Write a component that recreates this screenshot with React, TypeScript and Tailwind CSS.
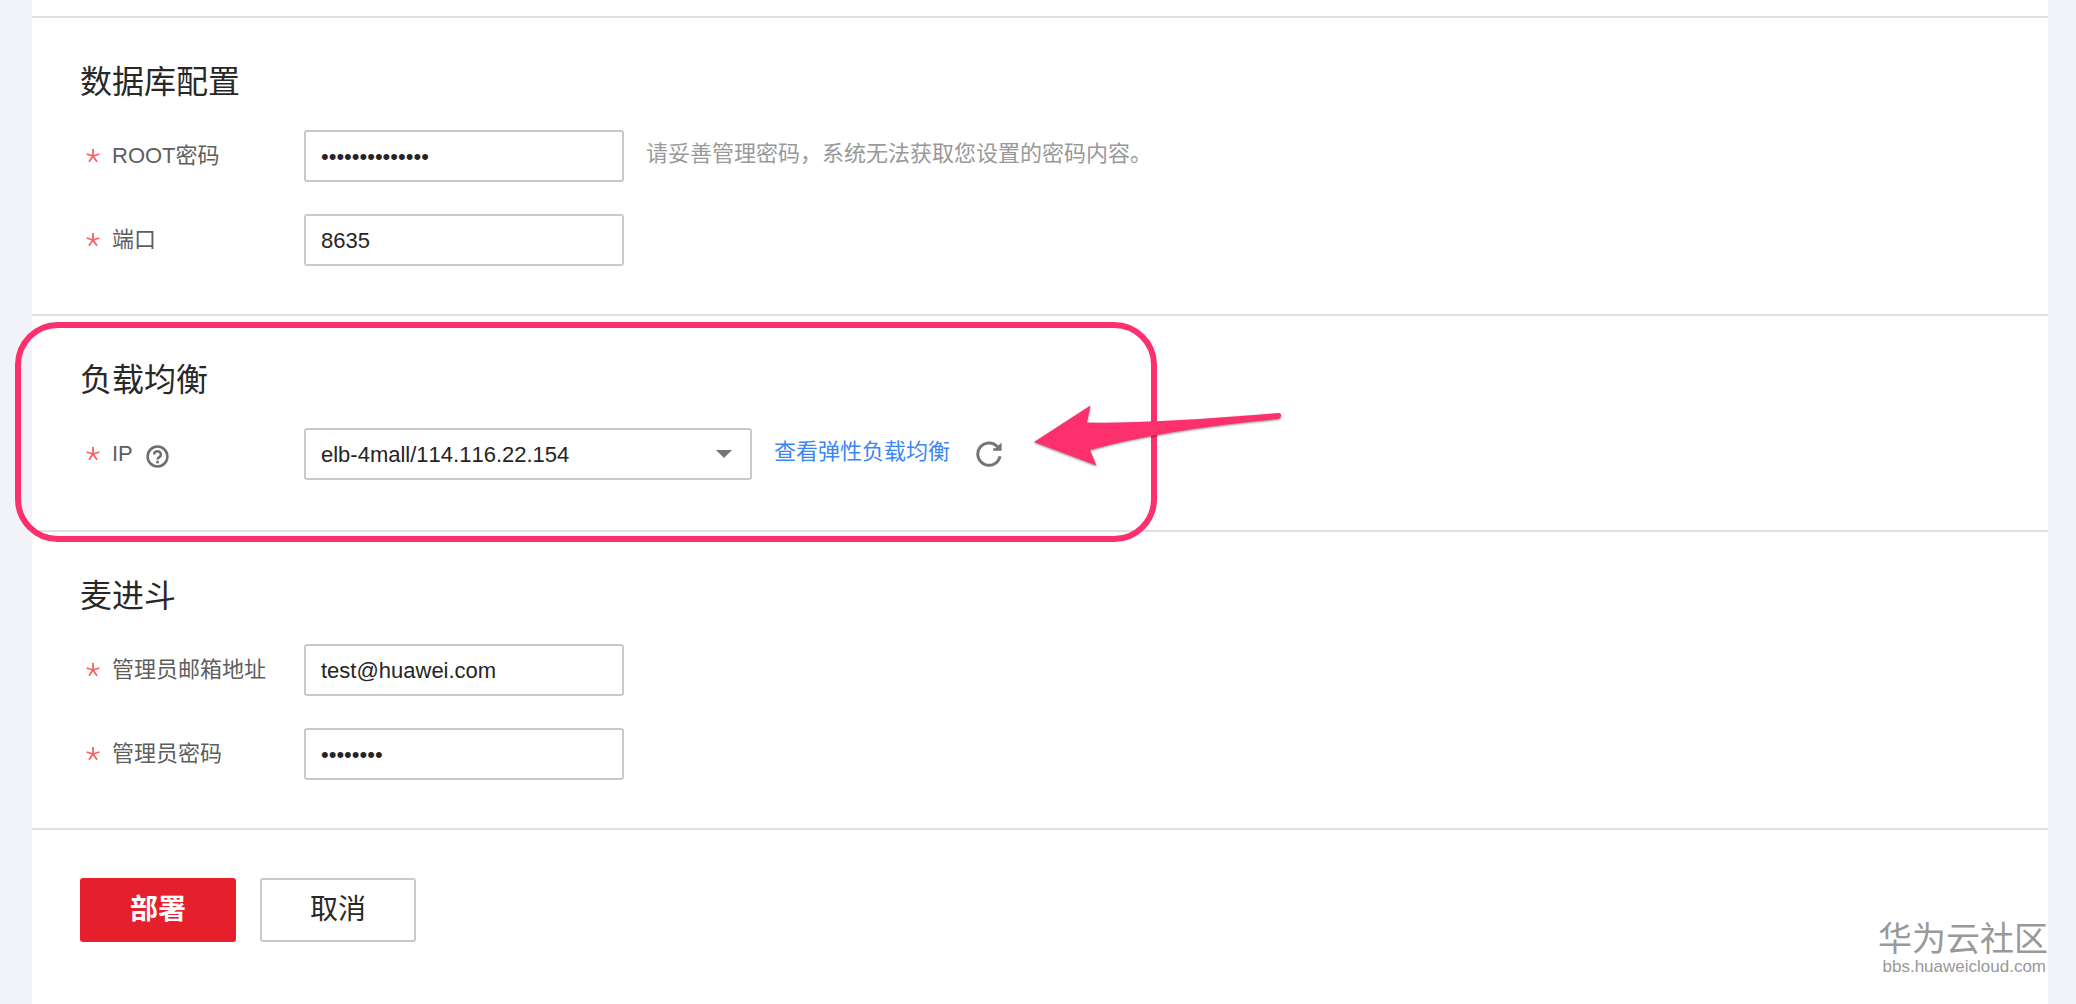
import type { ReactNode } from "react";

const inputClass =
  "h-[52px] w-80 rounded-[3px] border-2 border-[#c9c9c9] bg-white px-[15px] pt-[2px] text-[22px] text-[#252525] outline-none";

function Section({ title, children }: { title: string; children: ReactNode }) {
  return (
    <section className="border-t-2 border-[#dfdfdf] px-12 pb-12 pt-10">
      <h2 className="mb-6 text-[32px] leading-[48px] text-[#282828]">{title}</h2>
      <div className="flex flex-col gap-8">{children}</div>
    </section>
  );
}

function Field({
  id,
  label,
  help,
  children,
}: {
  id: string;
  label: string;
  help?: ReactNode;
  children: ReactNode;
}) {
  return (
    <div className="flex items-center">
      <div className="flex w-56 shrink-0 items-center pl-[6px] text-[22px] leading-8 text-[#5e5e5e]">
        <Asterisk />
        <label htmlFor={id}>{label}</label>
        {help}
      </div>
      {children}
    </div>
  );
}

function Asterisk() {
  return (
    <svg className="mr-3 h-[14px] w-[14px]" viewBox="0 0 14 14" fill="none" stroke="#f9605f" strokeWidth="1.8" aria-hidden="true">
      <path d="M7 0V7M7 7L0.6 5M7 7L13.4 5M7 7L3 12.8M7 7L11 12.8" />
    </svg>
  );
}

function HelpIcon() {
  return (
    <svg className="h-[23px] w-[23px]" viewBox="0 0 23 23" fill="none" stroke="#6e6e6e" aria-hidden="true">
      <circle cx="11.5" cy="11.5" r="9.9" strokeWidth="2.5" />
      <path d="M8.1 9.4a3.4 3.2 0 1 1 5.2 2.7c-1.2.8-1.8 1.2-1.8 2.4" strokeWidth="2.5" />
      <circle cx="11.5" cy="17" r="1.5" fill="#6e6e6e" stroke="none" />
    </svg>
  );
}

function RefreshIcon() {
  return (
    <svg className="h-[26px] w-[26px]" viewBox="0 0 26 26" fill="none" aria-hidden="true">
      <path d="M24 15.2A11.2 11.2 0 1 1 21.5 5.8" stroke="#757575" strokeWidth="3" />
      <path d="M25.6 1.5V9.800H17.2V7.200H19.500z" fill="#757575" />
    </svg>
  );
}

function Highlight() {
  return (
    <div className="pointer-events-none absolute -left-[17px] top-2 h-[220px] w-[1142px] rounded-[43px] border-[6px] border-[#fd2f6d]">
      <svg
        className="absolute left-[1008px] top-[70px] h-[76px] w-[260px] overflow-visible"
        viewBox="1029 398 260 76"
        aria-hidden="true"
      >
        <path
          d="M1034 442L1090.500 405.500L1087 422.500Q1150 424 1279 413Q1281.500 413.500 1281 416Q1280.500 418.500 1278 419Q1160 430 1090 450L1096.500 465.500Z"
          fill="#fd2f6d"
          style={{ filter: "drop-shadow(0 1px 1px rgba(0,0,0,.45))" }}
        />
      </svg>
    </div>
  );
}

export default function App() {
  return (
    <div className="min-h-screen bg-[#f2f3f8] pl-8 pr-7 font-['Liberation_Sans','Noto_Sans_CJK_SC',sans-serif] [font-kerning:none]">
      <main className="relative min-h-screen bg-white pt-4">
        <Section title="数据库配置">
          <Field id="root-password" label="ROOT密码">
            <input id="root-password" type="password" defaultValue="Huawei@1234567" className={inputClass} />
            <p className="ml-[22px] pb-1 text-[22px] leading-8 text-[#999]">
              请妥善管理密码，系统无法获取您设置的密码内容。
            </p>
          </Field>
          <Field id="port" label="端口">
            <input id="port" type="text" defaultValue="8635" className={inputClass} />
          </Field>
        </Section>

        <div className="relative pb-[2px]">
          <Section title="负载均衡">
            <Field
              id="ip"
              label="IP"
              help={
                <button type="button" aria-label="帮助" className="ml-[13px] mt-1">
                  <HelpIcon />
                </button>
              }
            >
              <div className="relative">
                <select
                  id="ip"
                  className="h-[52px] w-[448px] appearance-none rounded-[3px] border-2 border-[#c9c9c9] bg-white pl-[15px] pr-12 text-[22px] text-[#252525] outline-none [font-kerning:none]"
                >
                  <option>elb-4mall/114.116.22.154</option>
                </select>
                <svg className="pointer-events-none absolute right-5 top-[22px] h-2 w-4" viewBox="0 0 16 8" aria-hidden="true">
                  <path d="M0 0H16L8 8z" fill="#757575" />
                </svg>
              </div>
              <a href="#elb" className="ml-[22px] pb-1 text-[22px] leading-8 text-[#3a86f5]">
                查看弹性负载均衡
              </a>
              <button type="button" aria-label="刷新" className="ml-[26px]">
                <RefreshIcon />
              </button>
            </Field>
          </Section>
          <Highlight />
        </div>

        <Section title="麦进斗">
          <Field id="admin-email" label="管理员邮箱地址">
            <input id="admin-email" type="text" defaultValue="test@huawei.com" className={inputClass} />
          </Field>
          <Field id="admin-password" label="管理员密码">
            <input id="admin-password" type="password" defaultValue="Admin@12" className={inputClass} />
          </Field>
        </Section>

        <div className="flex gap-6 border-t-2 border-[#dfdfdf] px-12 py-12 text-[28px]">
          <button type="button" className="h-16 w-[156px] rounded-[3px] bg-[#e61f2c] font-bold text-white">
            部署
          </button>
          <button type="button" className="h-16 w-[156px] rounded-[3px] border-2 border-[#c9c9c9] bg-white text-[#282828]">
            取消
          </button>
        </div>

        <footer className="absolute bottom-[27px] right-0 flex flex-col items-end text-[#999]">
          <span className="text-[34px] leading-9">华为云社区</span>
          <span className="mr-[2px] text-[17px] leading-5">bbs.huaweicloud.com</span>
        </footer>
      </main>
    </div>
  );
}
